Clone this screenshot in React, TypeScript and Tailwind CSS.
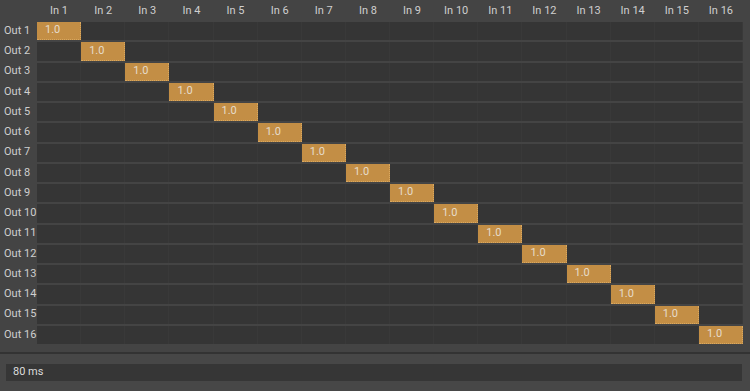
const N = 16;
const ins = Array.from({ length: N }, (_, i) => `In ${i + 1}`);
const outs = Array.from({ length: N }, (_, i) => `Out ${i + 1}`);

export default function App() {
  return (
    <div
      className="w-[750px] h-[391px] bg-[#444444] flex flex-col overflow-hidden text-[11px] text-[#cfcfcf]"
      style={{ fontFamily: "Roboto, 'Noto Sans', sans-serif" }}
    >
      {/* matrix */}
      <div className="flex flex-col pr-[7px] h-[352px]">
        <div className="flex h-[22px] items-center">
          <div className="w-[37px] shrink-0" />
          <div className="flex-1 grid grid-cols-16">
            {ins.map((l) => (
              <div key={l} className="text-center">
                {l}
              </div>
            ))}
          </div>
        </div>
        <div className="flex flex-col gap-[2px]">
          {outs.map((o, r) => (
            <div key={o} className="flex h-[18.25px]">
              <div className="w-[37px] shrink-0 pl-[4px] flex items-center">{o}</div>
              <div className="flex-1 grid grid-cols-16 bg-[#353535]">
                {ins.map((_, c) => (
                  <div
                    key={c}
                    className={
                      c === r
                        ? "bg-[#c38e45] border-r border-b border-dotted border-[#d9a860] flex items-center pl-[8px] text-[#e6dccb]"
                        : "border-r border-[#393939]"
                    }
                  >
                    {c === r ? "1.0" : null}
                  </div>
                ))}
              </div>
            </div>
          ))}
        </div>
      </div>
      {/* footer */}
      <div className="h-[2px] bg-[#333333]" />
      <div className="flex-1 bg-[#474747] px-[6px] pt-[10px]">
        <div className="h-[17px] w-[736px] bg-[#363636] flex items-center pl-[7px] text-[#dcdcdc]">80 ms</div>
      </div>
    </div>
  );
}
